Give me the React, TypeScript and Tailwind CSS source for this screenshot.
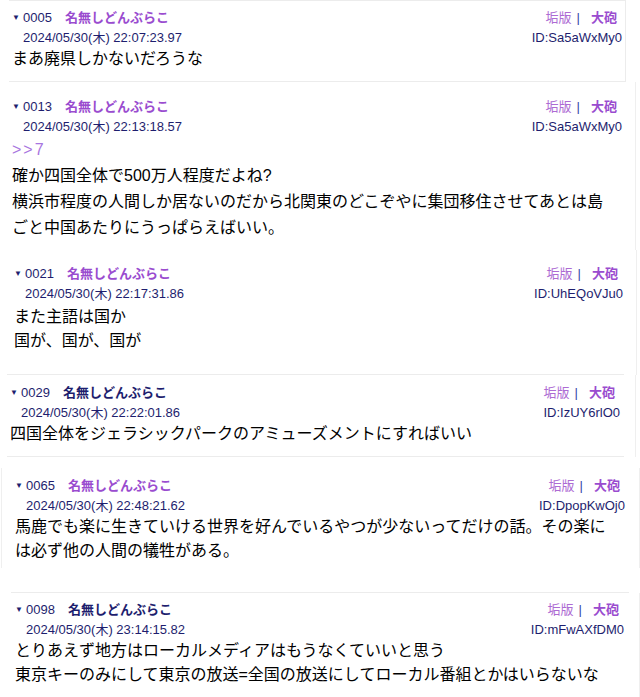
import React from "react";

type Post = {
  no: string;
  navyName?: boolean;
  time: string;
  id: string;
  anchor?: string;
  lines: string[];
};

const posts: Post[] = [
  { no: "0005", time: "22:07:23.97", id: "Sa5aWxMy0", lines: ["まあ廃県しかないだろうな"] },
  {
    no: "0013",
    time: "22:13:18.57",
    id: "Sa5aWxMy0",
    anchor: ">>7",
    lines: [
      "確か四国全体で500万人程度だよね?",
      "横浜市程度の人間しか居ないのだから北関東のどこぞやに集団移住させてあとは島",
      "ごと中国あたりにうっぱらえばいい。",
    ],
  },
  { no: "0021", time: "22:17:31.86", id: "UhEQoVJu0", lines: ["また主語は国か", "国が、国が、国が"] },
  {
    no: "0029",
    navyName: true,
    time: "22:22:01.86",
    id: "IzUY6rlO0",
    lines: ["四国全体をジェラシックパークのアミューズメントにすればいい"],
  },
  {
    no: "0065",
    time: "22:48:21.62",
    id: "DpopKwOj0",
    lines: ["馬鹿でも楽に生きていける世界を好んでいるやつが少ないってだけの話。その楽に", "は必ず他の人間の犠牲がある。"],
  },
  {
    no: "0098",
    navyName: true,
    time: "23:14:15.82",
    id: "mFwAXfDM0",
    lines: [
      "とりあえず地方はローカルメディアはもうなくていいと思う",
      "東京キーのみにして東京の放送=全国の放送にしてローカル番組とかはいらないな",
    ],
  },
];

const Head = ({ post }: { post: Post }) => {
  return (
    <div>
      <div className="flex h-[20px] items-center justify-between text-[13px]">
        <div className="flex items-center">
          <span className="w-[11px] text-[8px] text-[#1e1e6e]">▼</span>
          <span className="text-[#1e1e6e]">{post.no}</span>
          <span className={"ml-[13px] font-bold " + (post.navyName ? "text-[#1e1e6e]" : "text-[#9a4ccf]")}>
            名無しどんぶらこ
          </span>
        </div>
        <div className="mr-[5px] flex items-center">
          <span className="text-[#ad6bd3]">垢版</span>
          <span className="ml-[5px] text-[#3348a8]">|</span>
          <span className="ml-[11px] font-bold text-[#9a4ccf]">大砲</span>
        </div>
      </div>
      <div className="flex h-[19px] items-center justify-between pl-[11px] text-[13px] text-[#1e1e6e]">
        <span>2024/05/30(木) {post.time}</span>
        <span>ID:{post.id}</span>
      </div>
    </div>
  );
};

const Body = ({ post, lead }: { post: Post; lead: string }) => {
  return (
    <div className={"text-[16px] text-black " + lead}>
      {post.lines.map((line, i) => (
        <div key={i} className="whitespace-nowrap">
          {line}
        </div>
      ))}
    </div>
  );
};

export default function App() {
  const [p1, p2, p3, p4, p5, p6] = posts;
  return (
    <div
      className="h-[697px] w-[640px] overflow-hidden bg-white"
      style={{ fontFamily: '"Liberation Sans", "Noto Sans CJK JP", sans-serif' }}
    >
      {/* 0005 */}
      <div className="ml-[9px] h-[82px] w-[617px] border-t border-r border-b border-[#ececec] pt-[7px] pl-[3px] pr-[3px]">
        <Head post={p1} />
        <Body post={p1} lead="leading-[24px]" />
      </div>

      {/* 0013 */}
      <div className="h-[168px] w-[636px] border-r border-[#efefef] pt-[15px] pl-[12px] pr-[13px]">
        <Head post={p2} />
        <div className="h-[27px] pt-[2px] text-[16px] leading-[24px] tracking-[2px] text-[#a875e0]">{p2.anchor}</div>
        <Body post={p2} lead="leading-[26px]" />
      </div>

      {/* 0021 */}
      <div className="w-[637px] border-r border-[#efefef]">
        <div className="ml-[7px] h-[125px] w-[617px] border-b border-[#ececec] pt-[14px] pl-[7px] pr-[1px]">
          <Head post={p3} />
          <Body post={p3} lead="mt-[2px] leading-[24px]" />
        </div>
      </div>

      {/* 0029 */}
      <div className="w-[636px] border-r border-[#efefef]">
        <div className="ml-[7px] h-[82px] w-[617px] border-b border-[#ececec] pt-[8px] pl-[3px] pr-[4px]">
          <Head post={p4} />
          <Body post={p4} lead="leading-[24px]" />
        </div>
      </div>

      {/* 0065 */}
      <div className="pt-[11px]">
        <div className="ml-[1px] h-[100px] w-[639px] border-l border-r border-[#efefef] pt-[8px] pl-[13px] pr-[14px]">
          <Head post={p5} />
          <Body post={p5} lead="leading-[24px]" />
        </div>
        <div className="ml-[11px] h-[25px] w-[618px] border-b border-[#ececec]" />
      </div>

      {/* 0098 */}
      <div className="h-[110px] w-[640px] border-r border-[#efefef] pt-[7px] pl-[15px] pr-[15px]">
        <Head post={p6} />
        <Body post={p6} lead="leading-[24px]" />
      </div>
    </div>
  );
}
